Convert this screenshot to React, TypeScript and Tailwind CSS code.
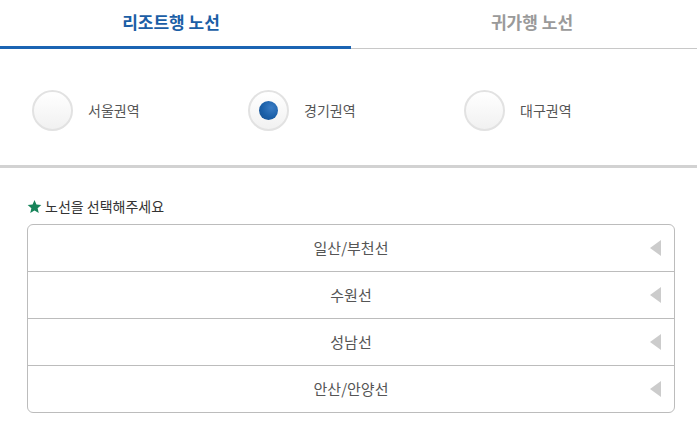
import React, { useState } from 'react';

const regions = ['서울권역', '경기권역', '대구권역'];
const routes = ['일산/부천선', '수원선', '성남선', '안산/안양선'];

export default function App() {
    const [tab, setTab] = useState(0);
    const [region, setRegion] = useState(1);

    return (
        <div
            className="w-[697px] h-[427px] bg-white overflow-hidden"
            style={{ fontFamily: '"Noto Sans CJK KR", "Noto Sans", sans-serif' }}
        >
            {/* Tabs */}
            <div className="flex h-[49px] border-b border-[#c8c8c8]">
                {['리조트행 노선', '귀가행 노선'].map((t, i) => (
                    <button
                        key={t}
                        onClick={() => setTab(i)}
                        className={`flex items-center justify-center text-[17px] font-bold pb-[2px] border-b-[3px] -mb-px ${i === 0 ? 'w-[351px] pr-[9px]' : 'flex-1 pl-[16px]'} ${tab === i
                            ? 'text-[#1b5ea6] border-[#1b64b3]'
                            : 'text-[#9a9a9a] border-transparent'
                            }`}
                    >
                        {t}
                    </button>
                ))}
            </div>

            {/* Region radios */}
            <div className="flex pl-[32px] pt-[6px] h-[119px] items-center border-b-[3px] border-[#d2d2d2]">
                {regions.map((r, i) => (
                    <label
                        key={r}
                        onClick={() => setRegion(i)}
                        className="w-[216px] flex items-center gap-[15px] cursor-pointer"
                    >
                        <span className="w-[41px] h-[41px] rounded-full border-2 border-[#e2e2e2] bg-[linear-gradient(#ffffff,#f1f1f1)] flex items-center justify-center">
                            {region === i && (
                                <span className="w-[19px] h-[19px] rounded-full bg-[radial-gradient(circle_at_65%_35%,#3a7cc4,#1a5fa8_55%,#184f8c)]" />
                            )}
                        </span>
                        <span className="text-[14px] text-[#555]">{r}</span>
                    </label>
                ))}
            </div>

            {/* Route list */}
            <div className="pl-[27px] pr-[22px] pt-[28px]">
                <div className="flex items-center gap-[3px] text-[14px] text-[#333] h-[20px]">
                    <svg width="15" height="15" viewBox="0 0 24 24">
                        <path
                            d="M12 1.5l3.1 7.2 7.8.7-5.9 5.2 1.8 7.7L12 18.3l-6.8 4 1.8-7.7-5.9-5.2 7.8-.7z"
                            fill="#17845a"
                        />
                    </svg>
                    <span>노선을 선택해주세요</span>
                </div>
                <div className="mt-[8px] border border-[#bcbcbc] rounded-[6px] overflow-hidden">
                    {routes.map((r, i) => (
                        <div
                            key={r}
                            className={`relative flex items-center justify-center text-[15px] text-[#555] ${i > 0 ? 'h-[47px] border-t border-[#bcbcbc]' : 'h-[46px]'}`}
                        >
                            {r}
                            <svg
                                className="absolute right-[13px] top-1/2 -translate-y-1/2"
                                width="11"
                                height="16"
                                viewBox="0 0 11 16"
                            >
                                <path d="M11 0L0 8l11 8z" fill="#cccccc" />
                            </svg>
                        </div>
                    ))}
                </div>
            </div>
        </div>
    );
}
